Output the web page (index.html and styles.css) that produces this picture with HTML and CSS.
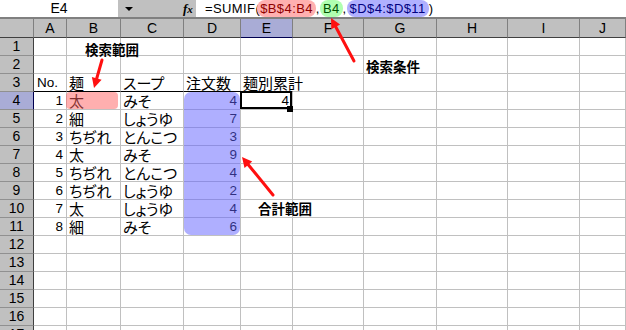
FILE: index.html
```html
<!DOCTYPE html>
<html lang="ja">
<head>
<meta charset="utf-8">
<title>SUMIF</title>
<link rel="stylesheet" href="styles.css">
</head>
<body>
<div class="app">
  <div class="fbar">
    <div class="namebox">E4</div>
    <div class="tools">
      <span class="drop"></span>
      <span class="fx"><i>f</i><i class="fxx">x</i></span>
    </div>
    <div class="formula"><span>=SUMIF(</span><span class="pill pr">$B$4:B4</span><span>,</span><span class="pill pg">B4</span><span>,</span><span class="pill pb">$D$4:$D$11</span><span>)</span></div>
  </div>

  <div class="sheet">
    <div class="ch"></div><div class="ch">A</div><div class="ch">B</div><div class="ch">C</div><div class="ch">D</div><div class="ch on">E</div><div class="ch">F</div><div class="ch">G</div><div class="ch">H</div><div class="ch">I</div><div class="ch">J</div>

    <div class="rh">1</div><div class="c"></div><div class="c"></div><div class="c"></div><div class="c"></div><div class="c"></div><div class="c"></div><div class="c"></div><div class="c"></div><div class="c"></div><div class="c"></div>
    <div class="rh">2</div><div class="c"></div><div class="c"></div><div class="c"></div><div class="c"></div><div class="c"></div><div class="c"></div><div class="c"></div><div class="c"></div><div class="c"></div><div class="c"></div>
    <div class="rh">3</div><div class="c u">No.</div><div class="c u j">麺</div><div class="c u j">スープ</div><div class="c u j">注文数</div><div class="c u j ov">麺別累計</div><div class="c"></div><div class="c"></div><div class="c"></div><div class="c"></div><div class="c"></div>
    <div class="rh on">4</div><div class="c n">1</div><div class="c j">太</div><div class="c j">みそ</div><div class="c n">4</div><div class="c n sel">4</div><div class="c"></div><div class="c"></div><div class="c"></div><div class="c"></div><div class="c"></div>
    <div class="rh">5</div><div class="c n">2</div><div class="c j">細</div><div class="c j">しょうゆ</div><div class="c n">7</div><div class="c"></div><div class="c"></div><div class="c"></div><div class="c"></div><div class="c"></div><div class="c"></div>
    <div class="rh">6</div><div class="c n">3</div><div class="c j">ちぢれ</div><div class="c j">とんこつ</div><div class="c n">3</div><div class="c"></div><div class="c"></div><div class="c"></div><div class="c"></div><div class="c"></div><div class="c"></div>
    <div class="rh">7</div><div class="c n">4</div><div class="c j">太</div><div class="c j">みそ</div><div class="c n">9</div><div class="c"></div><div class="c"></div><div class="c"></div><div class="c"></div><div class="c"></div><div class="c"></div>
    <div class="rh">8</div><div class="c n">5</div><div class="c j">ちぢれ</div><div class="c j">とんこつ</div><div class="c n">4</div><div class="c"></div><div class="c"></div><div class="c"></div><div class="c"></div><div class="c"></div><div class="c"></div>
    <div class="rh">9</div><div class="c n">6</div><div class="c j">ちぢれ</div><div class="c j">しょうゆ</div><div class="c n">2</div><div class="c"></div><div class="c"></div><div class="c"></div><div class="c"></div><div class="c"></div><div class="c"></div>
    <div class="rh">10</div><div class="c n">7</div><div class="c j">太</div><div class="c j">しょうゆ</div><div class="c n">4</div><div class="c"></div><div class="c"></div><div class="c"></div><div class="c"></div><div class="c"></div><div class="c"></div>
    <div class="rh">11</div><div class="c n">8</div><div class="c j">細</div><div class="c j">みそ</div><div class="c n">6</div><div class="c"></div><div class="c"></div><div class="c"></div><div class="c"></div><div class="c"></div><div class="c"></div>
    <div class="rh">12</div><div class="c"></div><div class="c"></div><div class="c"></div><div class="c"></div><div class="c"></div><div class="c"></div><div class="c"></div><div class="c"></div><div class="c"></div><div class="c"></div>
    <div class="rh">13</div><div class="c"></div><div class="c"></div><div class="c"></div><div class="c"></div><div class="c"></div><div class="c"></div><div class="c"></div><div class="c"></div><div class="c"></div><div class="c"></div>
    <div class="rh">14</div><div class="c"></div><div class="c"></div><div class="c"></div><div class="c"></div><div class="c"></div><div class="c"></div><div class="c"></div><div class="c"></div><div class="c"></div><div class="c"></div>
    <div class="rh">15</div><div class="c"></div><div class="c"></div><div class="c"></div><div class="c"></div><div class="c"></div><div class="c"></div><div class="c"></div><div class="c"></div><div class="c"></div><div class="c"></div>
    <div class="rh">16</div><div class="c"></div><div class="c"></div><div class="c"></div><div class="c"></div><div class="c"></div><div class="c"></div><div class="c"></div><div class="c"></div><div class="c"></div><div class="c"></div>
    <div class="rh">17</div><div class="c"></div><div class="c"></div><div class="c"></div><div class="c"></div><div class="c"></div><div class="c"></div><div class="c"></div><div class="c"></div><div class="c"></div><div class="c"></div>

    <div class="hl hl-red"></div>
    <div class="hl hl-blue"></div>
  </div>

  <svg class="arrows" width="626" height="330" viewBox="0 0 626 330">
    <g stroke="#ff1010" stroke-width="3" stroke-linecap="round" fill="none">
      <line x1="102" y1="60" x2="96.7" y2="78.5"/>
      <line x1="354" y1="61" x2="335.7" y2="26.8"/>
      <line x1="273" y1="195" x2="248.3" y2="164.7"/>
    </g>
    <g fill="#ff1010">
      <polygon points="94,88 101.6,79.8 91.9,77"/>
      <polygon points="331,18 340.1,24.5 331.3,29.2"/>
      <polygon points="242,157 252.2,161.6 244.5,167.9"/>
    </g>
  </svg>

  <div class="label l-range">検索範囲</div>
  <div class="label l-cond">検索条件</div>
  <div class="label l-sum">合計範囲</div>
</div>
</body>
</html>
```

FILE: styles.css
```css
* {
  box-sizing: border-box;
  margin: 0;
  padding: 0;
}

html, body {
  width: 626px;
  height: 330px;
  overflow: hidden;
  background: #fff;
}

body {
  font-family: "Liberation Sans", "Noto Sans CJK JP", sans-serif;
  font-size: 14px;
  color: #000;
}

.app {
  position: relative;
  width: 626px;
  height: 330px;
  overflow: hidden;
}

/* formula bar */
.fbar {
  display: flex;
  height: 19px;
  border-bottom: 2px solid #808080;
}

.namebox {
  width: 118px;
  background: #fff;
  text-align: center;
  line-height: 17px;
  font-size: 14px;
}

.tools {
  width: 78px;
  background: #c0c0c0;
  display: flex;
  align-items: center;
  padding-left: 7px;
}

.drop {
  width: 0;
  height: 0;
  border-left: 4px solid transparent;
  border-right: 4px solid transparent;
  border-top: 4px solid #000;
}

.fx {
  margin-left: 50px;
  font-family: "Liberation Serif", serif;
  font-weight: bold;
  font-size: 13px;
  line-height: 17px;
}

.fxx {
  font-size: 11px;
}

.formula {
  flex: 1;
  display: flex;
  align-items: stretch;
  padding-left: 9px;
  line-height: 17px;
  font-size: 13px;
  letter-spacing: 0.4px;
  white-space: nowrap;
}

.pill {
  border-radius: 8px;
  padding: 0 3px;
}

.pr {
  background: #ffb0b0;
  color: #900000;
  margin-left: -3px;
}

.pg {
  background: #b0ffb0;
  color: #005000;
}

.pb {
  background: #b0b0ff;
  color: #000080;
}

/* sheet grid */
.sheet {
  position: relative;
  display: grid;
  grid-template-columns: 34px 33px 54px 63px 57px 52px 71px 73px 71px 72px 1fr;
  grid-template-rows: 19px;
  grid-auto-rows: 18px;
}

.ch {
  background: #c0c0c0;
  border-right: 1px solid #808080;
  border-bottom: 1px solid #404040;
  text-align: center;
  line-height: 18px;
  font-size: 14px;
}

.rh {
  background: #c0c0c0;
  border-right: 1px solid #404040;
  border-bottom: 1px solid #909090;
  text-align: center;
  line-height: 16px;
  font-size: 14px;
}

.ch.on,
.rh.on {
  background: #a9acd6;
}

.ch.on {
  border-bottom-color: #000050;
}

.rh.on {
  border-right-color: #000050;
}

.c {
  border-right: 1px solid #c0c0c0;
  border-bottom: 1px solid #c0c0c0;
  white-space: nowrap;
  line-height: 17px;
  font-size: 13.5px;
  padding: 0 2px 0 3px;
}

.c.n {
  text-align: right;
  padding: 0 3px 0 2px;
}

.c.j {
  font-family: "Noto Sans CJK JP", sans-serif;
  font-size: 15px;
  font-feature-settings: "palt";
  padding-left: 2px;
}

.c.u {
  border-bottom-color: #000;
}

.c.ov {
  border-right-color: transparent;
}

/* active cell */
.sel {
  position: relative;
}

.sel::after {
  content: "";
  position: absolute;
  left: -1px;
  top: -1px;
  right: 0;
  bottom: 0;
  border: 2px solid #000;
}

.sel::before {
  content: "";
  position: absolute;
  right: -1px;
  bottom: -3px;
  width: 6px;
  height: 6px;
  background: #000;
  z-index: 1;
}

/* range finder highlights */
.hl {
  position: absolute;
  pointer-events: none;
}

.hl-red {
  left: 66px;
  top: 73px;
  width: 52px;
  height: 17px;
  border-radius: 4px;
  background: rgba(255, 96, 96, 0.5);
}

.hl-blue {
  left: 184px;
  top: 73px;
  width: 56px;
  height: 143px;
  border-radius: 7px;
  background: rgba(96, 96, 255, 0.5);
}

/* annotations */
.arrows {
  position: absolute;
  left: 0;
  top: 0;
}

.label {
  position: absolute;
  font-family: "Noto Sans CJK JP", sans-serif;
  font-weight: bold;
  font-size: 13.5px;
  line-height: 14px;
  white-space: nowrap;
}

.l-range {
  left: 85px;
  top: 42px;
}

.l-cond {
  left: 366px;
  top: 59px;
}

.l-sum {
  left: 258px;
  top: 201px;
}
```
